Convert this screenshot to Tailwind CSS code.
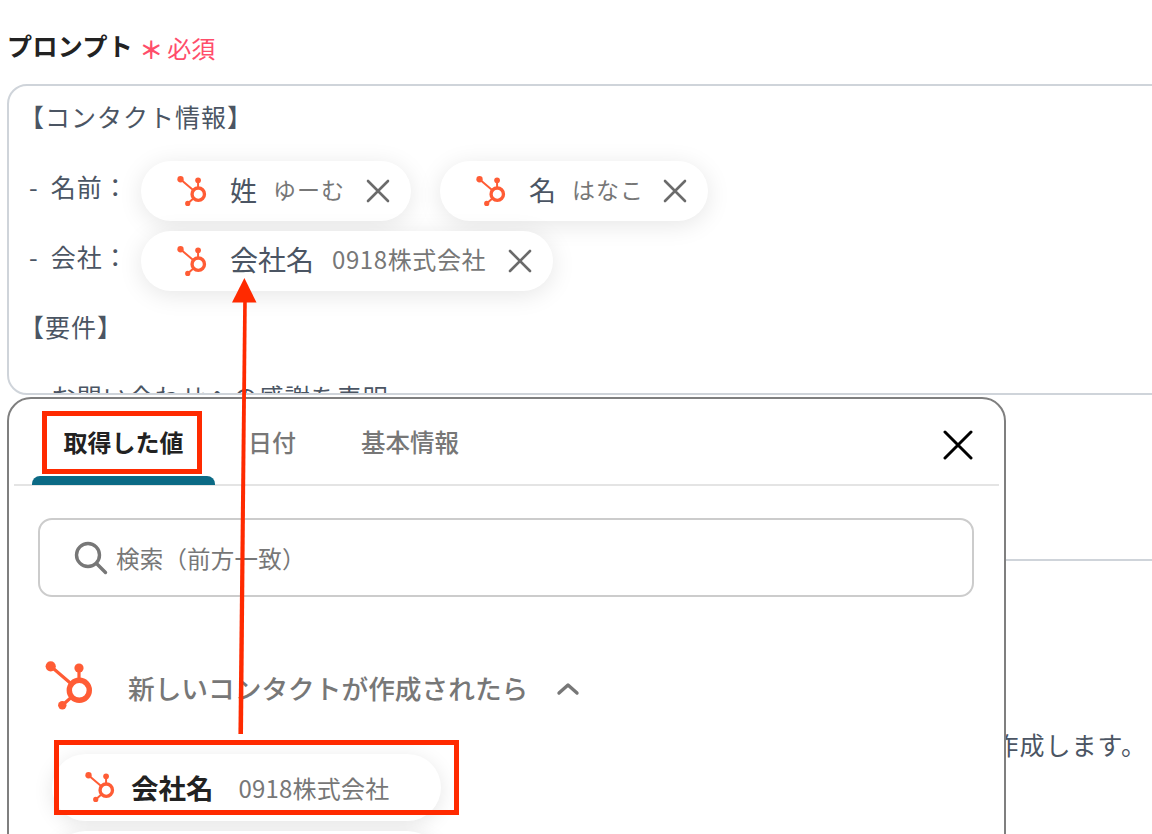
<!DOCTYPE html>
<html lang="ja">
<head>
    <meta charset="UTF-8">
    <meta name="viewport" content="width=device-width, initial-scale=1.0">
    <title>プロンプト</title>
    <script src="https://cdn.jsdelivr.net/npm/@tailwindcss/browser@4"></script>
</head>
<body class="relative h-[834px] w-[1152px] overflow-hidden bg-white font-['Noto_Sans_CJK_JP',sans-serif] text-[#4b5563]">
    <svg class="hidden">
        <symbol id="hs" viewBox="0 0 50 50">
            <g stroke="#ff5c35" fill="none">
                <path stroke-width="3.2" d="M6 5.5L34 29.5M34 7V29.5M17.3 44.3L34 29.5"></path>
                <circle cx="34.3" cy="29.3" r="10" stroke-width="5.4" fill="#fff"></circle>
            </g>
            <g fill="#ff5c35">
                <circle cx="5.7" cy="5.3" r="5.1"></circle>
                <circle cx="34" cy="7" r="4.6"></circle>
                <circle cx="17.3" cy="44.3" r="4.2"></circle>
            </g>
        </symbol>
    </svg>

    <div class="pt-[29px] pl-[7px]">
        <div class="flex h-[34px] items-center">
            <span class="text-[25px] font-bold tracking-[0.4px] text-[#222222]">プロンプト</span>
            <span class="ml-[6px] mt-[5px] text-[24px] font-bold leading-none text-[#ff4d6a]">＊</span>
            <span class="ml-[4px] mt-[3px] text-[24px] leading-none text-[#ff4d6a]">必須</span>
        </div>

        <!-- main prompt box -->
        <div class="mt-[21px] h-[311px] w-[1200px] overflow-hidden rounded-[20px] border-2 border-[#cfd4da] pl-[10px]">
            <div class="-mt-[5px] text-[25px] leading-[70px] tracking-[1px]">
                <div class="h-[70px]">【コンタクト情報】</div>
                <div class="flex h-[70px] items-center">
                    <span class="w-[122px] pl-[10px]"><span class="mr-[12px]">-</span>名前：</span>
                    <div class="mt-[10px] flex h-[60px] w-[270px] items-center rounded-full bg-white pl-[36px] shadow-[0_4px_24px_rgba(0,0,0,0.10)]">
                        <svg class="h-[31px] w-[31px]"><use href="#hs"></use></svg>
                        <span class="-mt-[4px] ml-[22px] text-[27px] leading-none tracking-normal">姓</span>
                        <span class="-mt-[4px] ml-[16px] text-[23px] leading-none text-[#777777]">ゆーむ</span>
                        <svg class="mr-[20px] ml-auto h-[26px] w-[26px]" viewBox="0 0 26 26" stroke="#6b6b6b" stroke-width="2.6" stroke-linecap="round"><path d="M3 3L23 23M23 3L3 23"></path></svg>
                    </div>
                    <div class="mt-[10px] ml-[29px] flex h-[60px] w-[268px] items-center rounded-full bg-white pl-[36px] shadow-[0_4px_24px_rgba(0,0,0,0.10)]">
                        <svg class="h-[31px] w-[31px]"><use href="#hs"></use></svg>
                        <span class="-mt-[4px] ml-[22px] text-[27px] leading-none tracking-normal">名</span>
                        <span class="-mt-[4px] ml-[16px] text-[23px] leading-none text-[#777777]">はなこ</span>
                        <svg class="mr-[20px] ml-auto h-[26px] w-[26px]" viewBox="0 0 26 26" stroke="#6b6b6b" stroke-width="2.6" stroke-linecap="round"><path d="M3 3L23 23M23 3L3 23"></path></svg>
                    </div>
                </div>
                <div class="flex h-[70px] items-center">
                    <span class="w-[122px] pl-[10px]"><span class="mr-[12px]">-</span>会社：</span>
                    <div class="mt-[10px] flex h-[60px] w-[412px] items-center rounded-full bg-white pl-[36px] shadow-[0_4px_24px_rgba(0,0,0,0.10)]">
                        <svg class="h-[31px] w-[31px]"><use href="#hs"></use></svg>
                        <span class="-mt-[4px] ml-[22px] text-[28px] leading-none tracking-normal">会社名</span>
                        <span class="-mt-[4px] ml-[18px] text-[24px] leading-none tracking-[0.6px] text-[#777777]">0918株式会社</span>
                        <svg class="mr-[20px] ml-auto h-[26px] w-[26px]" viewBox="0 0 26 26" stroke="#6b6b6b" stroke-width="2.6" stroke-linecap="round"><path d="M3 3L23 23M23 3L3 23"></path></svg>
                    </div>
                </div>
                <div class="h-[70px]">【要件】</div>
                <div class="h-[70px] pl-[10px]"><span class="mr-[12px]">-</span>お問い合わせへの感謝を表明</div>
            </div>
        </div>

        <!-- second field, mostly behind the panel -->
        <div class="mt-[164px] h-[300px] w-[1200px] border-t-2 border-[#cfd4da]">
            <div class="mt-[163px] w-[1140px] text-right text-[25px] leading-[40px] tracking-[1px]">作成します。</div>
        </div>
    </div>

    <!-- value picker panel -->
    <div class="absolute top-[397px] left-[7px] h-[520px] w-[999px] rounded-t-[24px] border-2 border-[#7f7f7f] bg-white">
        <div class="relative mx-[5px] flex h-[87px] border-b-2 border-[#e4e4e4]">
            <div class="relative ml-[18px] flex w-[183px] justify-center pt-[23px] leading-[40px]">
                <span class="text-[24px] font-bold text-[#222222]">取得した値</span>
                <div class="absolute right-0 -bottom-[1px] left-0 h-[9px] rounded-t-[8px] bg-[#0b6a85]"></div>
            </div>
            <span class="ml-[33px] pt-[23px] text-[24px] leading-[40px] font-medium text-[#777777]">日付</span>
            <span class="ml-[65px] pt-[23px] text-[24.5px] leading-[40px] font-medium text-[#777777]">基本情報</span>
            <svg class="absolute top-[31px] right-[26px] h-[30px] w-[30px]" viewBox="0 0 30 30" stroke="#000" stroke-width="3" stroke-linecap="round"><path d="M2 2L28 28M28 2L2 28"></path></svg>
        </div>

        <div class="mx-[30px] mt-[32px] flex h-[79px] w-[936px] -translate-x-[1px] items-center rounded-[14px] border-2 border-[#cccccc] pl-[34px]">
            <svg class="h-[34px] w-[34px]" viewBox="0 0 34 34" fill="none" stroke="#777777" stroke-width="3.4" stroke-linecap="round"><circle cx="14" cy="14" r="11.5"></circle><path d="M22.5 22.5L31.5 31.5"></path></svg>
            <span class="mt-[2px] ml-[8px] text-[23.5px] tracking-[0.2px] text-[#777777]">検索（前方一致）</span>
        </div>

        <div class="mt-[66px] ml-[36px] flex h-[50px] items-center">
            <svg class="-mt-[4px] h-[50px] w-[50px]"><use href="#hs"></use></svg>
            <span class="ml-[33px] text-[26.7px] font-medium text-[#777777]">新しいコンタクトが作成されたら</span>
            <svg class="mt-[2px] ml-[28px] h-[14px] w-[24px]" viewBox="0 0 24 14" fill="none" stroke="#777777" stroke-width="3.4" stroke-linecap="round" stroke-linejoin="round"><path d="M3 11L12 3L21 11"></path></svg>
        </div>

        <div class="mt-[41px] ml-[43px] flex h-[67px] w-[389px] items-center rounded-full bg-white pl-[33px] shadow-[0_4px_20px_rgba(0,0,0,0.10)]">
            <svg class="h-[31px] w-[31px]"><use href="#hs"></use></svg>
            <span class="ml-[15px] text-[27.5px] font-bold text-[#222222]">会社名</span>
            <span class="ml-[25px] text-[24px] tracking-[0.2px] text-[#777777]">0918株式会社</span>
        </div>
        <div class="mt-[10px] ml-[43px] h-[67px] w-[389px] rounded-full bg-white shadow-[0_4px_20px_rgba(0,0,0,0.10)]"></div>
    </div>

    <!-- annotations -->
    <div class="absolute top-[411px] left-[42px] h-[63px] w-[160px] border-[5px] border-[#ff2a00]"></div>
    <div class="absolute top-[740px] left-[54px] h-[75px] w-[405px] border-[5px] border-[#ff2a00]"></div>
    <svg class="absolute top-0 left-0 h-[834px] w-[1152px]" viewBox="0 0 1152 834" fill="#ff2a00">
        <path d="M238.4 734L243.2 300H246.8L243 734Z"></path>
        <path d="M244.4 278L256.5 302.5H232Z"></path>
    </svg>
</body>
</html>
